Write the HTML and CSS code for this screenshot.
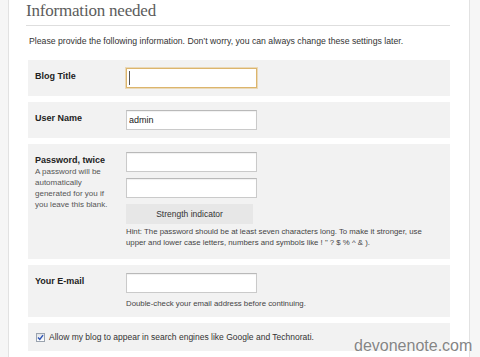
FILE: index.html
```html
<!DOCTYPE html>
<html lang="en">
<head>
    <meta charset="UTF-8">
    <title>Information needed</title>
    <link rel="stylesheet" href="styles.css">
</head>
<body>
    <div class="panel">
        <!-- Heading -->
        <h1 class="title">Information needed</h1>
        <p class="intro">Please provide the following information. Don&#8217;t worry, you can always change these settings later.</p>

        <form class="setup">
            <div class="row">
                <div class="label"><label for="blog_title">Blog Title</label></div>
                <div class="field">
                    <span class="input-wrap">
                        <input type="text" id="blog_title" class="focused">
                        <span class="caret"></span>
                    </span>
                </div>
            </div>

            <div class="row">
                <div class="label"><label for="user_name">User Name</label></div>
                <div class="field">
                    <input type="text" id="user_name" value="admin">
                </div>
            </div>

            <div class="row tall">
                <div class="label">
                    <label for="pass1">Password, twice</label>
                    <p class="sub">A password will be automatically generated for you if you leave this blank.</p>
                </div>
                <div class="field">
                    <input type="password" id="pass1">
                    <input type="password" id="pass2" class="next">
                    <div class="strength">Strength indicator</div>
                    <p class="hint">Hint: The password should be at least seven characters long. To make it stronger, use upper and lower case letters, numbers and symbols like ! " ? $ % ^ &amp; ).</p>
                </div>
            </div>

            <div class="row">
                <div class="label"><label for="admin_email">Your E-mail</label></div>
                <div class="field">
                    <input type="text" id="admin_email">
                    <p class="note">Double-check your email address before continuing.</p>
                </div>
            </div>

            <div class="row check">
                <span class="checkbox">
                    <svg width="7" height="7" viewBox="0 0 7 7"><path d="M1 3.5 L2.8 5.4 L6 1.2" fill="none" stroke="#2f55b5" stroke-width="1.4"/></svg>
                </span>
                <span>Allow my blog to appear in search engines like Google and Technorati.</span>
            </div>
        </form>
    </div>

    <div class="watermark">devonenote.com</div>
</body>
</html>
```

FILE: styles.css
```css
/* Base */
* {
    margin: 0;
    padding: 0;
    box-sizing: border-box;
}

body {
    background: #f6f6f6;
    font-family: "Liberation Sans", Arial, sans-serif;
    font-size: 8px;
    color: #333;
    height: 357px;
    overflow: hidden;
}

.panel {
    margin-left: 8px;
    width: 462px;
    min-height: 357px;
    background: #fff;
    border-left: 1px solid #e2e2e2;
    border-right: 1px solid #e2e2e2;
    padding: 0 19px 0 17px;
}

/* Heading */
.title {
    font-family: "Liberation Serif", "Times New Roman", serif;
    font-size: 17px;
    font-weight: normal;
    letter-spacing: -0.2px;
    line-height: 22px;
    color: #5c5c5c;
    padding-bottom: 3px;
    border-bottom: 1px solid #dedede;
}

.intro {
    margin: 9px 0 13px 3px;
    font-size: 8.7px;
    line-height: 12px;
}

/* Form rows */
.row {
    display: grid;
    grid-template-columns: 91px 1fr;
    margin-left: 2px;
    margin-bottom: 6px;
    padding: 8px 8px 8px 7px;
    background: #f2f2f2;
}

.row.tall {
    padding-bottom: 11px;
}

.label {
    padding-top: 3px;
}

.label label {
    display: block;
    font-size: 9px;
    font-weight: bold;
    line-height: 11px;
    color: #222;
}

.label .sub {
    width: 76px;
    line-height: 11px;
    color: #555;
}

.field input {
    display: block;
    width: 131px;
    height: 20px;
    padding: 0 2px;
    font-family: "Liberation Sans", Arial, sans-serif;
    font-size: 9px;
    color: #222;
    background: #fff;
    border: 1px solid #cacaca;
    border-top-color: #b9b9b9;
    box-shadow: inset 0 1px 1px rgba(0, 0, 0, 0.06);
    outline: none;
}

.field input.focused {
    border-color: #dcb56c;
    box-shadow: 0 0 0 1px rgba(228, 197, 138, 0.55);
}

.field input.next {
    margin-top: 6px;
}

.input-wrap {
    display: block;
    position: relative;
    width: 131px;
}

.caret {
    position: absolute;
    left: 3px;
    top: 3px;
    width: 1px;
    height: 14px;
    background: #555;
}

.strength {
    width: 127px;
    height: 20px;
    margin-top: 6px;
    background: #e7e7e7;
    font-size: 8.5px;
    line-height: 20px;
    text-align: center;
    color: #333;
}

.hint {
    margin-top: 3px;
    font-size: 7.8px;
    line-height: 10.5px;
    color: #444;
}

.note {
    margin-top: 5px;
    font-size: 7.8px;
    line-height: 11px;
    color: #444;
}

/* Search engine checkbox */
.row.check {
    display: flex;
    align-items: center;
    gap: 4px;
    padding: 8px;
    font-size: 8.5px;
    line-height: 12px;
}

.checkbox {
    width: 9px;
    height: 9px;
    display: flex;
    align-items: center;
    justify-content: center;
    border: 1px solid #9aa3ae;
    background: linear-gradient(#dfe3e8, #fff);
}

.watermark {
    position: absolute;
    left: 354px;
    top: 337px;
    font-size: 16px;
    line-height: 18px;
    color: #858585;
    text-shadow: 0 0 2px #fff;
}
```
